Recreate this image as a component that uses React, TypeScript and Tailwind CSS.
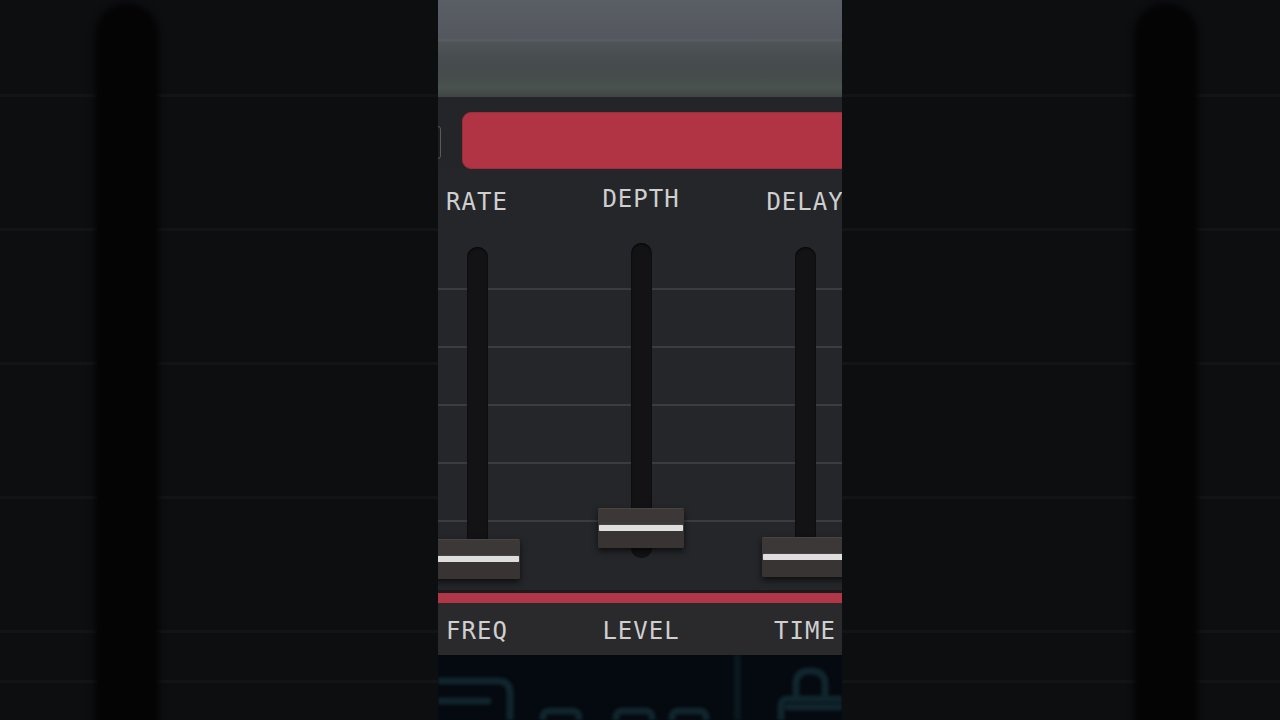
import React from "react";

const mono = { fontFamily: '"DejaVu Sans Mono", "Liberation Mono", monospace' };

function Side({ slotLeft }: { slotLeft: string }) {
  return (
    <div className="h-[720px] w-[438px] shrink-0 overflow-hidden bg-[#0d0e10] bg-[repeating-linear-gradient(to_bottom,#131417_0px,#131417_3px,transparent_3px,transparent_134px)] bg-position-[0_-40px]">
      <div className={`pt-[3px] ${slotLeft}`}>
        <div className="h-[740px] w-[64px] rounded-t-[32px] bg-[#040405] blur-[3px]" />
      </div>
    </div>
  );
}

function Handle({ top }: { top: string }) {
  return (
    <div
      className={`absolute left-1/2 ${top} flex h-[40px] w-[86px] -translate-x-1/2 flex-col overflow-hidden rounded-[2px] border-t border-[#4a4545] bg-[#3a3636] shadow-[0_3px_6px_rgba(0,0,0,0.65)]`}
    >
      <div className="h-[16px] bg-[#3c3838]" />
      <div className="mx-[1px] h-[6px] rounded-[1px] bg-[#dedede] shadow-[0_0_1px_rgba(255,255,255,0.6)]" />
      <div className="flex-1 bg-[#383434]" />
    </div>
  );
}

function Column({
  label,
  labelMt,
  slotMt,
  slotH,
  handleTop,
}: {
  label: string;
  labelMt: string;
  slotMt: string;
  slotH: string;
  handleTop: string;
}) {
  return (
    <div className="relative flex h-[421px] flex-col items-center">
      <div
        className={`${labelMt} h-[24px] whitespace-nowrap text-[24px] leading-[24px] tracking-[1px] text-[#cfcfcf]`}
        style={mono}
      >
        {label}
      </div>
      <div className={`${slotMt} ${slotH} w-[21px] rounded-full bg-[#131316] shadow-[inset_0_1px_2px_rgba(0,0,0,0.8)]`} />
      <Handle top={handleTop} />
    </div>
  );
}

export default function App() {
  return (
    <div className="flex h-[720px] w-[1280px] overflow-hidden bg-[#0d0e10]">
      <Side slotLeft="pl-[95px]" />

      <div className="flex h-[720px] w-[404px] shrink-0 flex-col overflow-hidden">
        {/* top gradient strip */}
        <div className="h-[97px] shrink-0 bg-[linear-gradient(to_bottom,#5a5e65_0px,#54585e_38px,#5a5f64_40px,#4f5458_42px,#474c4f_60px,#454c4b_76px,#4a524f_88px,#3f4543_97px)]" />

        {/* panel */}
        <div className="flex shrink-0 flex-col bg-[#242528]">
          <div className="flex h-[72px] items-start pt-[15px]">
            <div className="ml-[-27px] mt-[14px] h-[33px] w-[30px] shrink-0 rounded-[3px] border border-[#5a5a5c] bg-[#1d1e21]" />
            <div className="ml-[21px] h-[57px] w-[420px] shrink-0 rounded-[9px] border border-[#9c2e3c] bg-[#b03444]" />
          </div>

          <div className="h-[421px] overflow-hidden bg-[#25262a] bg-[repeating-linear-gradient(to_bottom,#3b3c40_0px,#3b3c40_2px,transparent_2px,transparent_58px)] bg-size-[100%_234px] bg-position-[0_119px] bg-no-repeat">
            <div className="ml-[-43px] grid w-[492px] grid-cols-3">
              <Column label="RATE" labelMt="mt-[21px]" slotMt="mt-[33px]" slotH="h-[311px]" handleTop="top-[370px]" />
              <Column label="DEPTH" labelMt="mt-[18px]" slotMt="mt-[32px]" slotH="h-[315px]" handleTop="top-[339px]" />
              <Column label="DELAY" labelMt="mt-[21px]" slotMt="mt-[33px]" slotH="h-[311px]" handleTop="top-[368px]" />
            </div>
          </div>
        </div>

        {/* red line */}
        <div className="h-[3px] shrink-0 bg-[#1b1b1e]" />
        <div className="h-[10px] shrink-0 bg-[#b13747]" />

        {/* bottom labels */}
        <div className="h-[52px] shrink-0 overflow-hidden bg-[#2a2a2d]">
          <div className="ml-[-43px] grid w-[492px] grid-cols-3 pt-[16px]">
            {["FREQ", "LEVEL", "TIME"].map((t) => (
              <div
                key={t}
                className="text-center text-[24px] leading-[24px] tracking-[1px] text-[#cfcfcf]"
                style={mono}
              >
                {t}
              </div>
            ))}
          </div>
        </div>

        {/* navy logo strip */}
        <div className="h-[65px] shrink-0 overflow-hidden bg-[#050a10]">
          <svg width="404" height="65" viewBox="0 0 404 65" className="blur-[1.5px]">
            <g fill="none" stroke="#10252d" strokeWidth="7" strokeLinecap="round">
              <path d="M-6 26 H60 Q72 26 72 38 V80" />
              <path d="M-6 46 H50" />
              <rect x="105" y="56" width="36" height="30" rx="6" />
              <rect x="178" y="56" width="36" height="30" rx="6" />
              <rect x="234" y="56" width="34" height="30" rx="6" />
              <path d="M358 40 V29 Q358 16 372 16 Q387 16 387 29 V40" />
              <rect x="343" y="44" width="80" height="40" rx="6" />
              <path d="M350 52 H412" />
            </g>
            <rect x="296" y="0" width="7" height="65" fill="#0b181e" />
          </svg>
        </div>
      </div>

      <Side slotLeft="pl-[292px]" />
    </div>
  );
}
